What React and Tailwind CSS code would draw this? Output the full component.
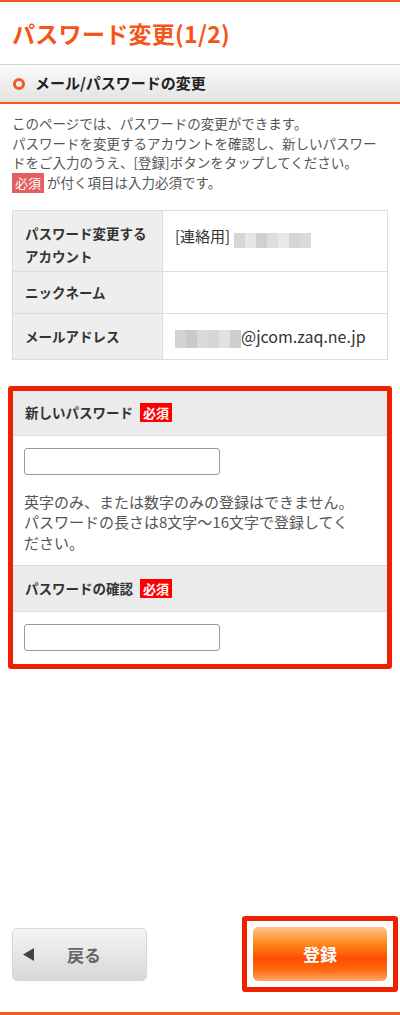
import React from "react";

function Blur({ shades, h }) {
  return (
    <span className={`inline-flex align-middle ${h}`}>
      {shades.map((c, i) => (
        <span key={i} className="w-[11px] h-full" style={{ backgroundColor: c }} />
      ))}
    </span>
  );
}

function Badge({ label }) {
  return (
    <span className="inline-flex items-center h-[19px] px-[3px] bg-[#ff0000] text-white text-[13px] font-bold leading-none">
      {label}
    </span>
  );
}

export default function App() {
  return (
    <div className="w-[400px] h-[1015px] flex flex-col bg-white border-t-2 border-b-[3px] border-[#f15a22] font-['Noto_Sans_CJK_JP','Noto_Sans',sans-serif] overflow-hidden">
      {/* Title */}
      <div className="h-[63px] flex items-center px-3 border-b border-[#d2d2d2]">
        <h1 className="text-[23px] font-bold text-[#f4561a] leading-none tracking-[0.3px]">
          パスワード変更(1/2)
        </h1>
      </div>

      {/* Section header */}
      <div className="h-[39px] flex items-center pl-[13px] gap-[10px] bg-gradient-to-b from-[#fbfbfb] to-[#e2e2e2] border-b-2 border-[#f15a22]">
        <span className="w-[12px] h-[12px] rounded-full border-[3px] border-[#f15a22]" />
        <span className="text-[15px] font-bold text-[#222]">メール/パスワードの変更</span>
      </div>

      {/* Intro */}
      <div className="px-3 pt-[10px] text-[13.5px] leading-[19.5px] text-[#555]">
        <p>このページでは、パスワードの変更ができます。</p>
        <p className="whitespace-nowrap">パスワードを変更するアカウントを確認し、新しいパスワー</p>
        <p className="whitespace-nowrap">ドをご入力のうえ、[登録]ボタンをタップしてください。</p>
        <p className="flex items-center">
          <span className="inline-flex items-center h-[20px] px-[3px] mr-[3px] bg-[#e15f5f] text-white text-[13px]">必須</span>
          が付く項目は入力必須です。
        </p>
      </div>

      {/* Table */}
      <div className="mt-[17px] mx-3 border border-[#dcdcdc] grid grid-cols-[150px_1fr] text-[#333]">
        <div className="bg-[#eeeeee] border-r border-[#dcdcdc] pl-[12px] pt-[11px] pb-[4px] leading-[23px] text-[13.5px] font-bold h-[60px]">
          パスワード変更する<br />アカウント
        </div>
        <div className="pl-[12px] pt-[14px] text-[15px] leading-[22px] flex items-start">
          <span>[連絡用]</span>
          <span className="ml-[4px] mt-[3px] blur-[0.4px]">
            <Blur h="h-[15px]" shades={["#d6d6d6", "#e6e6e6", "#d0d0d0", "#dedede", "#e9e9e9", "#d4d4d4", "#dadada"]} />
          </span>
        </div>

        <div className="bg-[#eeeeee] border-r border-t border-[#dcdcdc] pl-[12px] h-[42px] flex items-center text-[13.5px] font-bold">
          ニックネーム
        </div>
        <div className="border-t border-[#dcdcdc] h-[42px]" />

        <div className="bg-[#eeeeee] border-r border-t border-[#dcdcdc] pl-[12px] h-[46px] flex items-center text-[13.5px] font-bold">
          メールアドレス
        </div>
        <div className="border-t border-[#dcdcdc] h-[46px] pl-[12px] flex items-center text-[16px]">
          <span className="blur-[0.4px]">
            <Blur h="h-[18px]" shades={["#d3d3d3", "#c9c9c9", "#dadada", "#d6d6d6", "#e2e2e2", "#cfcfcf"]} />
          </span>
          <span>@jcom.zaq.ne.jp</span>
        </div>
      </div>

      {/* Form box */}
      <div className="mt-[26px] mx-[8px] border-[5px] border-[#ee2200] rounded-[3px]">
        <div className="h-[45px] bg-[#ebebeb] border-b border-[#dcdcdc] flex items-center pl-[12px] gap-[7px]">
          <span className="text-[13.5px] font-bold text-[#333]">新しいパスワード</span>
          <Badge label="必須" />
        </div>
        <div className="px-[11px] pt-[12px] pb-[12px]">
          <div className="w-[196px] h-[27px] border border-[#9a9a9a] rounded-[3px] bg-white" />
          <p className="mt-[17px] text-[15px] leading-[20.5px] text-[#555]">
            英字のみ、または数字のみの登録はできません。<br />
            パスワードの長さは8文字〜16文字で登録してく<br />
            ださい。
          </p>
        </div>
        <div className="h-[47px] bg-[#ebebeb] border-y border-[#dcdcdc] flex items-center pl-[12px] gap-[7px]">
          <span className="text-[13.5px] font-bold text-[#333]">パスワードの確認</span>
          <Badge label="必須" />
        </div>
        <div className="px-[11px] pt-[12px] pb-[13px]">
          <div className="w-[196px] h-[27px] border border-[#9a9a9a] rounded-[3px] bg-white" />
        </div>
      </div>

      {/* Buttons */}
      <div className="mt-auto flex items-start pl-[12px] pr-[2px] pb-[20px]">
        <button className="mt-[12px] w-[135px] h-[53px] rounded-[5px] bg-gradient-to-b from-[#f4f4f4] to-[#d8d8d8] border border-[#d6d6d6] flex items-center pl-[10px]">
          <svg width="11" height="13" viewBox="0 0 11 13" className="shrink-0">
            <polygon points="11,0 11,13 0,6.5" fill="#444" />
          </svg>
          <span className="ml-[33px] text-[17px] font-bold text-[#666]">戻る</span>
        </button>
        <div className="ml-auto border-[5px] border-[#ee2200] rounded-[3px] p-[6px]">
          <button className="w-[134px] h-[54px] rounded-[5px] bg-[linear-gradient(to_bottom,#ffc489_0%,#ff8a1e_30%,#ff4c00_58%,#ff6a10_80%,#ffa765_100%)] flex items-center justify-center">
            <span className="text-[17px] font-bold text-white [text-shadow:0_0_1px_rgba(0,0,0,0.2)]">登録</span>
          </button>
        </div>
      </div>
    </div>
  );
}
